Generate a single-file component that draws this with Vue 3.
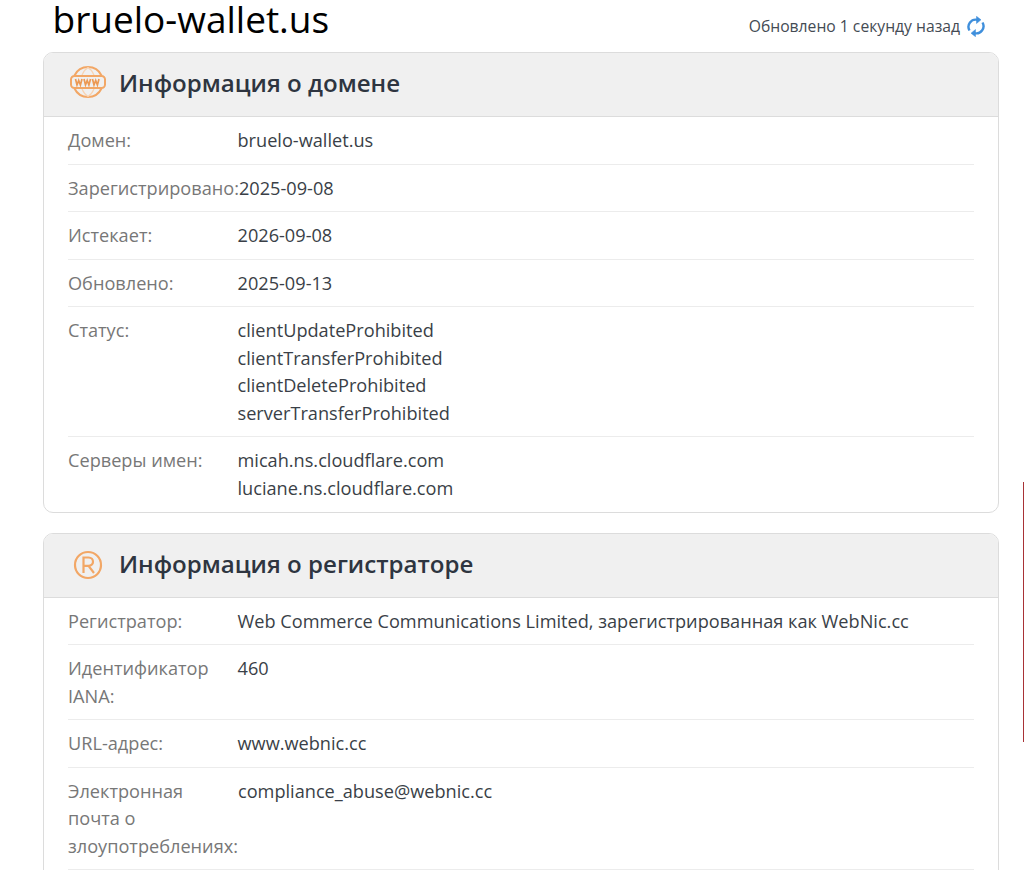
<script setup>
const cards = [
  {
    title: 'Информация о домене',
    icon: 'www',
    rows: [
      { label: 'Домен:', values: ['bruelo-wallet.us'] },
      { label: 'Зарегистрировано:', values: ['2025-09-08'] },
      { label: 'Истекает:', values: ['2026-09-08'] },
      { label: 'Обновлено:', values: ['2025-09-13'] },
      { label: 'Статус:', values: ['clientUpdateProhibited', 'clientTransferProhibited', 'clientDeleteProhibited', 'serverTransferProhibited'] },
      { label: 'Серверы имен:', values: ['micah.ns.cloudflare.com', 'luciane.ns.cloudflare.com'] },
    ],
  },
  {
    title: 'Информация о регистраторе',
    icon: 'r',
    rows: [
      { label: 'Регистратор:', values: ['Web Commerce Communications Limited, зарегистрированная как WebNic.cc'] },
      { label: 'Идентификатор IANA:', values: ['460'] },
      { label: 'URL-адрес:', values: ['www.webnic.cc'] },
      { label: 'Электронная почта о злоупотреблениях:', values: ['compliance_abuse@webnic.cc'] },
      { label: 'Телефон:', values: ['+60.189836788'] },
    ],
  },
]
</script>

<template>
  <div class="page">
    <div class="top">
      <h1 class="domain">bruelo-wallet.us</h1>
      <div class="updated">
        <span>Обновлено 1 секунду назад</span>
        <svg class="refresh" width="18" height="21" viewBox="0 0 18 21" fill="none" stroke="#3f8fdc" stroke-width="2.4">
          <path d="M2.500 14.500 A7.200 7.200 0 0 1 10.500 3.900" />
          <path d="M9.500 0.300 L14 3.800 L9.500 7.500 Z" fill="#3f8fdc" stroke-width="0.500" />
          <path d="M15.500 6.500 A7.200 7.200 0 0 1 7.500 17.100" />
          <path d="M8.500 13.500 L4 17.200 L8.500 20.700 Z" fill="#3f8fdc" stroke-width="0.500" />
        </svg>
      </div>
    </div>

    <section v-for="card in cards" :key="card.title" class="card">
      <header class="card-head">
        <span class="icon">
          <svg v-if="card.icon === 'www'" class="icon-www" width="36" height="32" viewBox="0 0 36 32" fill="none" stroke="#f2a766" stroke-width="2">
            <path d="M4.500 9.500 A15 15 0 0 1 31.500 9.500" />
            <path d="M4.500 22.500 A15 15 0 0 0 31.500 22.500" />
            <path d="M12 9 C13.500 5.500 15.500 3 18 1.500 C20.500 3 22.500 5.500 24 9" stroke="#f8d3b2" stroke-width="1.200" />
            <path d="M12 23 C13.500 26.500 15.500 29 18 30.500 C20.500 29 22.500 26.500 24 23" stroke="#f8d3b2" stroke-width="1.200" />
            <rect x="1" y="10" width="34" height="12" rx="3.500" />
            <path d="M5.500 13 L7 19 L8.700 14.500 L10.400 19 L12 13 M14 13 L15.500 19 L17.200 14.500 L18.900 19 L20.500 13 M22.500 13 L24 19 L25.700 14.500 L27.400 19 L29 13" stroke="#ec9a55" stroke-width="1.700" />
          </svg>
          <svg v-else class="icon-r" width="30" height="30" viewBox="0 0 30 30" fill="none" stroke="#f2a766" stroke-width="2.200">
            <circle cx="15" cy="15" r="13" />
            <path d="M10.500 23 V7.500 H15.500 C21.500 7.500 21.500 15.800 15.500 15.800 H10.500 M15.500 15.800 L21 23" />
          </svg>
        </span>
        <h2 class="card-title">{{ card.title }}</h2>
      </header>
      <div class="card-body">
        <div v-for="row in card.rows" :key="row.label" class="row">
          <div class="label">{{ row.label }}</div>
          <div class="value">
            <div v-for="v in row.values" :key="v">{{ v }}</div>
          </div>
        </div>
      </div>
    </section>
    <div class="edge"></div>
  </div>
</template>

<style>
html, body { margin: 0; background: #fff; overflow: hidden; }
</style>

<style scoped>
.page {
  height: 870px;
  overflow: hidden;
  padding: 0 25px 0 43px;
  box-sizing: border-box;
  font-family: "Open Sans", "DejaVu Sans", sans-serif;
  position: relative;
}
.top {
  display: flex;
  justify-content: space-between;
  align-items: flex-end;
  height: 52px;
  padding: 0 14px 15px 9.5px;
  box-sizing: border-box;
}
.domain {
  margin: 0;
  font-size: 37px;
  font-weight: 400;
  line-height: 38px;
  color: #000;
  align-self: flex-start;
}
.updated {
  display: flex;
  align-items: center;
  gap: 7px;
  font-size: 15.7px;
  line-height: 22px;
  color: #444b54;
}
.card {
  border: 1px solid #dcdcdc;
  border-radius: 10px;
  margin-bottom: 20px;
  overflow: hidden;
  background: #fff;
}
.card-head {
  display: flex;
  align-items: center;
  height: 64px;
  box-sizing: border-box;
  background: #f0f0f0;
  border-bottom: 1px solid #dcdcdc;
  padding: 0 0 4px 24px;
}
.icon {
  width: 40px;
  margin-right: 11px;
  display: flex;
  justify-content: center;
}
.icon-www { margin-top: -2px; }
.icon-r { margin-top: 4px; }
.card-title {
  margin: 0;
  font-size: 24.1px;
  font-weight: 600;
  color: #2e3540;
}
.card-body {
  padding: 0 24px;
}
.row {
  display: flex;
  padding: 10px 0 9px;
  border-bottom: 1px solid #ececec;
  font-size: 18.16px;
  line-height: 27.5px;
}
.row:last-child { border-bottom: 0; padding-bottom: 9.5px; }
.label {
  flex: 0 0 169.5px;
  color: #777;
}
.value {
  color: #3a3f47;
}
.edge {
  position: absolute;
  right: 0;
  top: 482px;
  width: 1px;
  height: 260px;
  background: #a83236;
}
</style>
